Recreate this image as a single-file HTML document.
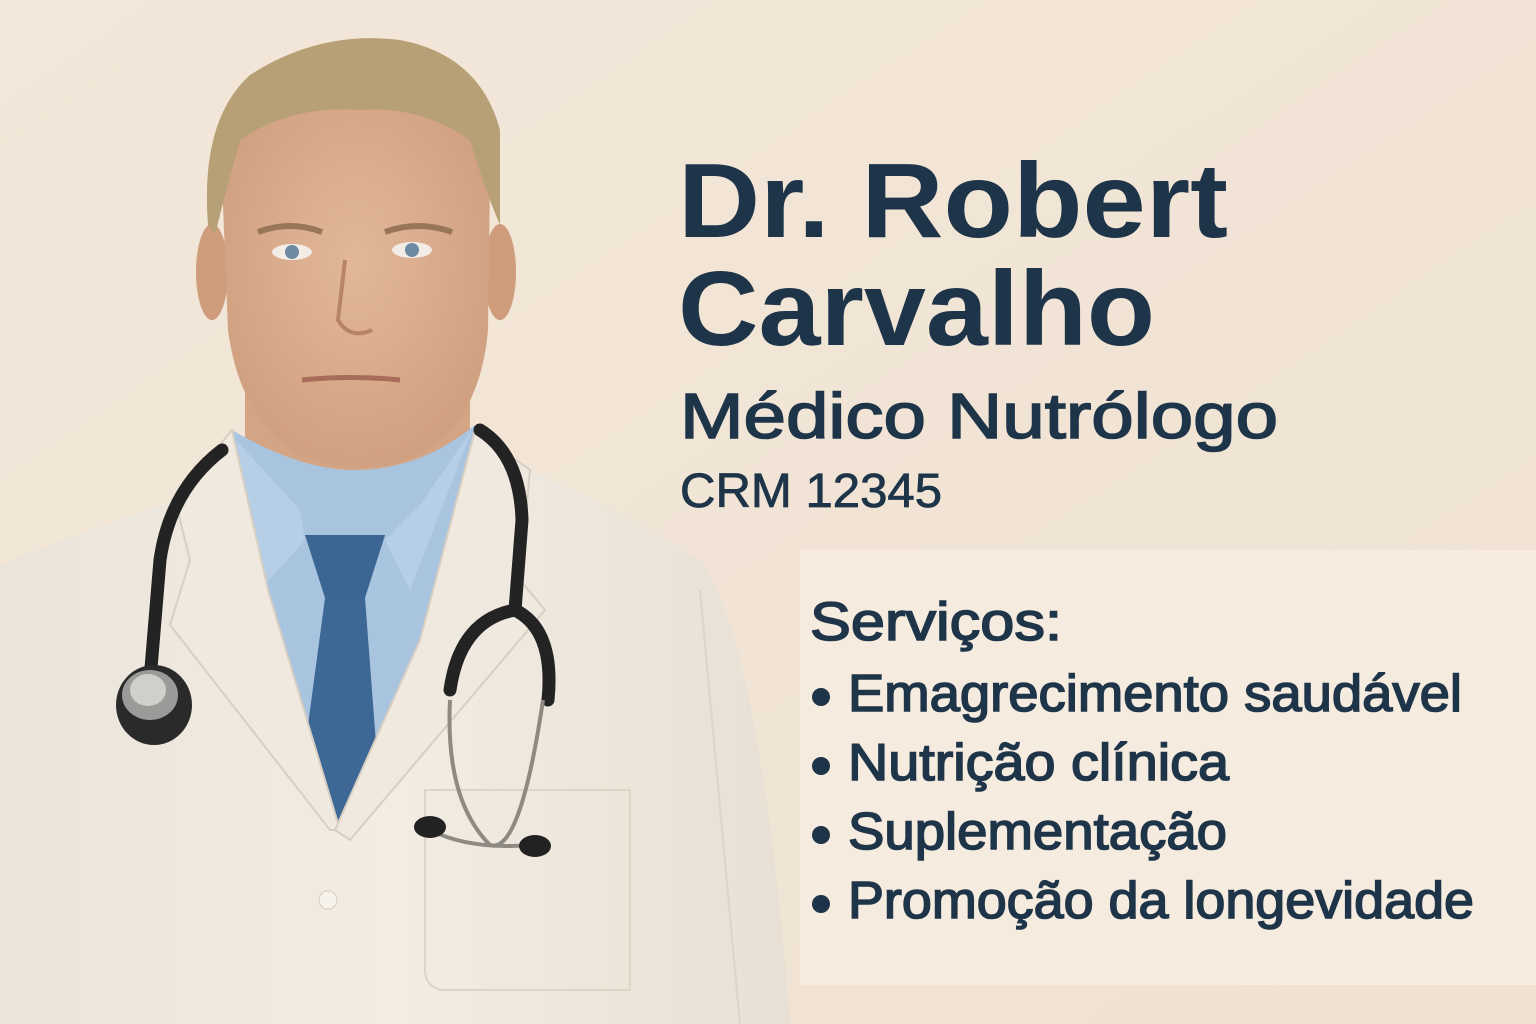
<!DOCTYPE html>
<html><head><meta charset="utf-8"><style>
html,body{margin:0;padding:0;width:1536px;height:1024px;overflow:hidden;background:#f2e6d8}
svg{display:block}
</style></head><body>
<svg width="1536" height="1024" viewBox="0 0 1536 1024" xmlns="http://www.w3.org/2000/svg">
<defs>
<linearGradient id="bg" x1="0" y1="0" x2="1" y2="1"><stop offset="0" stop-color="#f3e7d9"/><stop offset="1" stop-color="#efe2d2"/></linearGradient>
<radialGradient id="face" cx="0.5" cy="0.45" r="0.6"><stop offset="0" stop-color="#e2b899"/><stop offset="1" stop-color="#cf9f7f"/></radialGradient>
<linearGradient id="coat" x1="0" y1="0" x2="1" y2="0"><stop offset="0" stop-color="#ebe4da"/><stop offset="0.5" stop-color="#f2ece3"/><stop offset="1" stop-color="#e8e0d4"/></linearGradient>
</defs>
<rect width="1536" height="1024" fill="url(#bg)"/>
<rect x="800" y="550" width="736" height="435" fill="#f6ebdf"/>

<path d="M245 380 L470 380 L470 500 L245 500 Z" fill="#d4a585"/>
<path d="M0 565 Q60 540 175 500 L232 430 L330 560 L475 430 L530 470 Q640 520 700 560 Q760 640 790 1024 L0 1024 Z" fill="url(#coat)"/>
<path d="M232 430 Q300 470 355 470 Q420 470 475 425 L470 520 L420 640 L335 830 L268 590 Z" fill="#a9c4df"/>
<path d="M236 440 L262 588 L305 540 L300 510 Z" fill="#b6cee6"/>
<path d="M472 430 L410 590 L385 540 L420 505 Z" fill="#b6cee6"/>
<path d="M305 535 L385 535 L365 598 L325 598 Z" fill="#3b6592"/>
<path d="M325 598 L365 598 L378 770 L340 828 L302 770 Z" fill="#3d6794"/>
<path d="M232 430 L175 500 L190 560 L170 625 L330 830 L340 830 L268 590 Z" fill="#f0e9df" stroke="#d8cfc2" stroke-width="2"/>
<path d="M475 430 L530 470 L520 580 L545 610 L350 840 L335 830 L420 640 Z" fill="#f0e9df" stroke="#d8cfc2" stroke-width="2"/>
<line x1="700" y1="590" x2="740" y2="1024" stroke="#ddd4c7" stroke-width="2"/>
<path d="M425 790 L630 790 L630 990 L440 990 Q425 985 425 970 Z" fill="none" stroke="#ddd4c6" stroke-width="2"/>
<circle cx="328" cy="900" r="9" fill="#f7f2ea" stroke="#d6ccbf"/>

<ellipse cx="212" cy="272" rx="16" ry="48" fill="#cf9c7c"/>
<ellipse cx="500" cy="272" rx="16" ry="48" fill="#cf9c7c"/>
<path d="M222 180 Q222 100 355 90 Q490 100 490 180 L488 330 Q480 420 420 455 Q360 480 300 455 Q240 420 228 330 Z" fill="url(#face)"/>
<path d="M208 225 Q200 120 250 75 Q320 30 400 40 Q480 55 500 130 L500 225 Q485 190 470 140 Q420 105 360 110 Q290 105 240 140 Q226 190 215 235 Z" fill="#b79f76"/>
<path d="M258 232 Q290 220 322 232" stroke="#9a7658" stroke-width="6" fill="none"/>
<path d="M385 232 Q418 220 452 232" stroke="#9a7658" stroke-width="6" fill="none"/>
<ellipse cx="292" cy="252" rx="20" ry="8" fill="#f2ece6"/><circle cx="292" cy="252" r="7" fill="#6e8aa3"/>
<ellipse cx="412" cy="250" rx="20" ry="8" fill="#f2ece6"/><circle cx="412" cy="250" r="7" fill="#6e8aa3"/>
<path d="M345 260 L338 320 Q350 340 372 330" stroke="#b88466" stroke-width="4" fill="none"/>
<path d="M302 380 Q352 375 400 380" stroke="#a86d5a" stroke-width="5" fill="none"/>

<path d="M222 450 Q170 490 160 560 L150 680" stroke="#232323" stroke-width="13" fill="none" stroke-linecap="round"/>
<ellipse cx="154" cy="705" rx="38" ry="40" fill="#2a2a2a"/>
<ellipse cx="150" cy="695" rx="28" ry="25" fill="#9a9a98"/>
<ellipse cx="148" cy="690" rx="18" ry="16" fill="#cfcfcc"/>
<path d="M480 430 Q520 455 522 520 L515 610 Q460 620 450 690" stroke="#232323" stroke-width="13" fill="none" stroke-linecap="round"/>
<path d="M515 610 Q555 630 548 700" stroke="#232323" stroke-width="13" fill="none" stroke-linecap="round"/>
<path d="M450 700 Q445 800 490 845 Q520 855 543 700" stroke="#8e8a82" stroke-width="4" fill="none"/>
<path d="M430 830 Q470 850 530 845" stroke="#8e8a82" stroke-width="4" fill="none"/>
<ellipse cx="430" cy="827" rx="16" ry="11" fill="#222"/>
<ellipse cx="535" cy="846" rx="16" ry="11" fill="#222"/>

<g fill="#1e3448" font-family="Liberation Sans, sans-serif">
<text x="678" y="237" font-size="106" font-weight="700" textLength="550" lengthAdjust="spacingAndGlyphs">Dr. Robert</text>
<text x="678" y="345" font-size="106" font-weight="700" textLength="477" lengthAdjust="spacingAndGlyphs">Carvalho</text>
<g stroke="#1e3448" stroke-width="1.6">
<text x="680" y="438" font-size="64" textLength="598" lengthAdjust="spacingAndGlyphs">Médico Nutrólogo</text>
<text x="680" y="507" font-size="48" stroke-width="0.8" textLength="262" lengthAdjust="spacingAndGlyphs">CRM 12345</text>
<text x="810" y="640" font-size="54" textLength="252" lengthAdjust="spacingAndGlyphs">Serviços:</text>
<text x="848" y="711" font-size="52" textLength="614" lengthAdjust="spacingAndGlyphs">Emagrecimento saudável</text>
<text x="848" y="780" font-size="52" textLength="381" lengthAdjust="spacingAndGlyphs">Nutrição clínica</text>
<text x="848" y="849" font-size="52" textLength="379" lengthAdjust="spacingAndGlyphs">Suplementação</text>
<text x="848" y="918" font-size="52" textLength="626" lengthAdjust="spacingAndGlyphs">Promoção da longevidade</text>
</g>
<circle cx="821" cy="697" r="9"/><circle cx="821" cy="766" r="9"/><circle cx="821" cy="835" r="9"/><circle cx="821" cy="904" r="9"/>
</g>
</svg>
</body></html>
